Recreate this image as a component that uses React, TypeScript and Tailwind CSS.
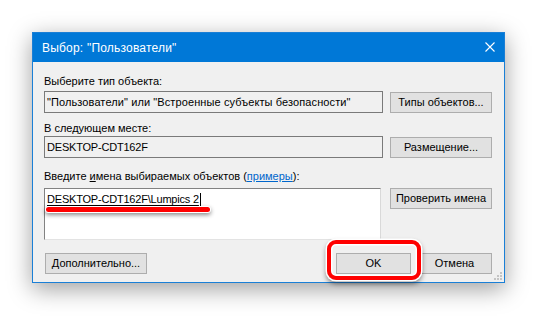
import type { ReactNode } from "react";

const FONT = "font-['Liberation_Sans',Arial,sans-serif]";

function Button({ children, className = "" }: { children: ReactNode; className?: string }) {
  return (
    <div
      className={`flex h-[21px] items-center justify-center border border-[#adadad] bg-[#e1e1e1] text-[11px] leading-none text-black ${className}`}
    >
      {children}
    </div>
  );
}

function ReadonlyBox({ children, className = "" }: { children: ReactNode; className?: string }) {
  return (
    <div
      className={`flex h-[22px] flex-1 items-center border border-[#7a7a7a] bg-[#f0f0f0] pl-[2px] text-[11px] text-black ${className}`}
    >
      {children}
    </div>
  );
}

function Label({ children, className = "" }: { children: ReactNode; className?: string }) {
  return <div className={`h-[14px] text-[11px] leading-[14px] text-black ${className}`}>{children}</div>;
}

export default function App() {
  return (
    <div className={`relative h-[316px] w-[538px] overflow-hidden bg-white pl-[32px] pt-[32px] ${FONT}`}>
      <div className="relative flex h-[251px] w-[473px] flex-col border border-[#1a7fd6] bg-[#f0f0f0] shadow-[0_6px_22px_rgba(0,0,0,0.38)]">
        {/* title bar */}
        <div className="flex h-[29px] items-center justify-between bg-[#0078d7] pl-[9px] pr-[9px]">
          <span className="text-[12px] tracking-[0.2px] text-white">Выбор: "Пользователи"</span>
          <svg width="10" height="10" viewBox="0 0 10 10" className="mb-[1px]">
            <path d="M0.5 0.5 L9.5 9.5 M9.5 0.5 L0.5 9.5" stroke="#ffffff" strokeWidth="1.1" />
          </svg>
        </div>

        <div className="flex flex-1 flex-col pl-[11px] pr-[12px] pt-[12px]">
          <Label>Выберите тип объекта:</Label>
          <div className="mt-[3px] flex items-start gap-[7px]">
            <ReadonlyBox className="tracking-[0.1px]">"Пользователи" или "Встроенные субъекты безопасности"</ReadonlyBox>
            <Button className="mt-[1px] w-[102px]">Типы объектов...</Button>
          </div>

          <Label className="mt-[8px]">В следующем месте:</Label>
          <div className="mt-[1px] flex items-start gap-[7px]">
            <ReadonlyBox className="tracking-[-0.2px]">DESKTOP-CDT162F</ReadonlyBox>
            <Button className="mt-[1px] w-[102px]">Размещение...</Button>
          </div>

          <Label className="mt-[11px]">
            Введите <span className="underline">и</span>мена выбираемых объектов (
            <span className="text-[#0066cc] underline">примеры</span>):
          </Label>
          <div className="mt-[5px] flex items-start gap-[9px]">
            <div className="h-[52px] flex-1 border border-b-[#e3e3e3] border-l-[#828282] border-r-[#d9d9d9] border-t-[#828282] bg-white pl-[2px] pt-[3px]">
              <div className="flex items-center text-[11px] leading-[14px] tracking-[-0.2px] text-black">
                <span className="underline underline-offset-[2px]">DESKTOP-CDT162F\Lumpics 2</span>
                <span className="ml-[1px] h-[13px] w-px bg-black" />
              </div>
            </div>
            <Button className="w-[102px]">Проверить имена</Button>
          </div>

          <div className="mt-[13px] flex items-start justify-between pl-[1px]">
            <Button className="h-[20px] w-[102px]">Дополнительно...</Button>
            <div className="flex gap-[6px]">
              <Button className="h-[20px] w-[75px]">OK</Button>
              <Button className="h-[20px] w-[75px]">Отмена</Button>
            </div>
          </div>
        </div>

        {/* size grip */}
        <svg width="8" height="8" viewBox="0 0 8 8" className="absolute bottom-[2px] right-[2px]">
          <rect x="6" y="0" width="2" height="2" fill="#c4c4c4" />
          <rect x="3" y="3" width="2" height="2" fill="#c4c4c4" />
          <rect x="6" y="3" width="2" height="2" fill="#c4c4c4" />
          <rect x="0" y="6" width="2" height="2" fill="#c4c4c4" />
          <rect x="3" y="6" width="2" height="2" fill="#c4c4c4" />
          <rect x="6" y="6" width="2" height="2" fill="#c4c4c4" />
        </svg>
      </div>

      {/* red annotation under the typed name */}
      <div className="absolute left-[46px] top-[207px] h-[5px] w-[164px] rounded-full bg-[#f00] shadow-[0_0_0_1px_#ffffff,0_2px_4px_1px_rgba(0,0,0,0.45)]" />

      {/* red frame around OK */}
      <div className="absolute left-[327px] top-[240px] h-[40px] w-[94px] rounded-[9px] border-[4px] border-[#f00] shadow-[0_0_0_1.5px_#ffffff,inset_0_0_0_1.5px_#ffffff,0_3px_5px_1px_rgba(0,0,0,0.45)]" />
    </div>
  );
}
